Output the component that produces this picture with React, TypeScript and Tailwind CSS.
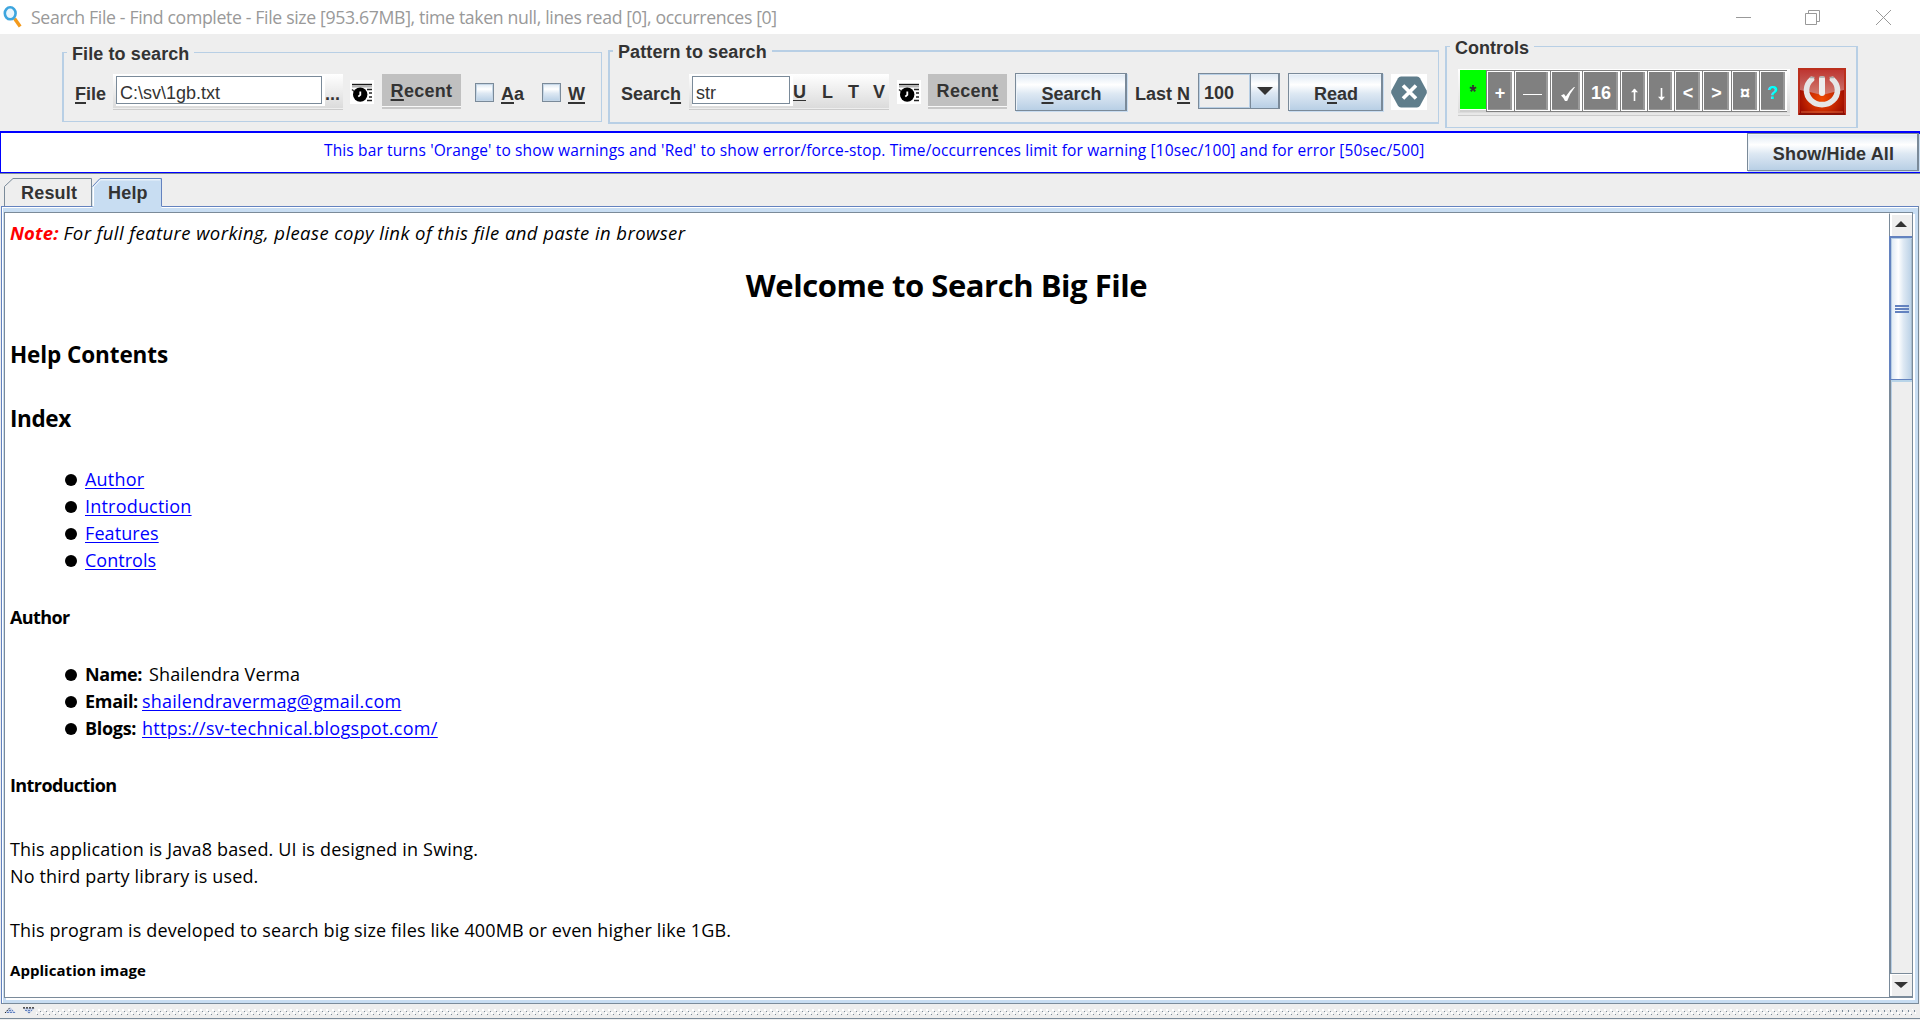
import type { ReactNode } from "react";

type Props = { className?: string; children?: ReactNode };

const UI = "font-['Liberation_Sans',Arial,sans-serif] text-[18px] text-[#333333] whitespace-nowrap";
const TEXT = "font-['Open_Sans','Noto_Sans',sans-serif] whitespace-nowrap";
const STEEL = "bg-[linear-gradient(to_bottom,#dde8f3_0%,#ffffff_30%,#dde8f3_55%,#b8cfe5_100%)]";

function Key({ children }: Props) {
  return <u className="decoration-2 underline-offset-2">{children}</u>;
}

function Legend({ className = "", children }: Props) {
  return <div className={"absolute left-[3px] bg-[#eeeeee] px-[5px] leading-5 font-bold " + className}>{children}</div>;
}

function HistoryIcon({ className = "" }: Props) {
  return (
    <svg viewBox="0 0 24 24" className={"h-6 w-6 shrink-0 bg-white " + className}>
      <path d="M2 3.8h20v1.500H2z" fill="#1a1a1a" />
      <path d="M2 5.800h20v1.700H2z" fill="#b5b5b5" />
      <path d="M17 9.500h5M19 13h3M19 17h3M17 20.500h5" stroke="#222" strokeWidth="1.400" />
      <path d="M2 9.500l3 2.500" stroke="#333" strokeWidth="1.600" />
      <circle cx="10.200" cy="14.600" r="7.200" fill="#000" />
      <path d="M10.300 11.500v3.300l-2 1.800" stroke="#fff" strokeWidth="1.800" fill="none" />
    </svg>
  );
}

function Recent({ className = "", children }: Props) {
  return (
    <div className={"h-[35px] w-[79px] shrink-0 bg-[#f8f8f8] " + className}>
      <div className="flex h-8 items-center justify-center bg-[#c0c0c0] pt-[2px] font-bold tracking-[0.3px]">
        <span>{children}</span>
      </div>
      <div className="mt-px h-[2px] bg-[#c8c8c8]" />
    </div>
  );
}

function Check({ className = "" }: Props) {
  return <div className={"h-[19px] w-[19px] shrink-0 border border-[#7a8a99] shadow-[inset_0_0_0_1px_#c5d6e6] " + STEEL + " " + className} />;
}

function SteelButton({ className = "", children }: Props) {
  return (
    <div className={"flex shrink-0 items-center justify-center border border-r-2 border-[#7a8a99] pt-[5px] pl-[2px] font-bold shadow-[inset_1px_1px_0_#edf3f9,1px_1px_0_#c8dcf0] " + STEEL + " " + className}>
      <span>{children}</span>
    </div>
  );
}

function Cell({ className = "", children }: Props) {
  return (
    <div className={"h-[42px] shrink-0 border-t border-b border-l border-[#808080] bg-white py-px pr-[2px] pl-px " + className}>
      <div className="flex h-[38px] items-center justify-center border-r-2 border-b border-r-[#9b9b9b] border-b-[#999999] bg-[#808080] pt-[6px] pl-[2px] font-bold text-white">
        {children}
      </div>
    </div>
  );
}

function PowerIcon() {
  return (
    <svg viewBox="0 0 48 47" className="ml-2 h-[47px] w-12 shrink-0">
      <defs>
        <radialGradient id="glow" cx=".5" cy=".66" r=".6">
          <stop offset="0" stopColor="#f04a00" />
          <stop offset=".45" stopColor="#c92a00" />
          <stop offset="1" stopColor="#8c0000" />
        </radialGradient>
        <linearGradient id="gloss" x1="0" y1="0" x2="0" y2="1">
          <stop offset="0" stopColor="#c8403a" />
          <stop offset="1" stopColor="#d08c88" />
        </linearGradient>
      </defs>
      <rect width="48" height="47" rx="1.500" fill="url(#glow)" />
      <path d="M2 2h44v20Q35 24 24 27 13 24 2 22z" fill="url(#gloss)" opacity=".85" />
      <rect x="1" y="1" width="46" height="45" fill="none" stroke="#bb2f1d" strokeWidth="2" />
      <path d="M1 46h46" stroke="#7a0800" strokeWidth="1.500" />
      <path d="M3 44h42" stroke="#d0623c" />
      <path d="M13.500 11.500A15.500 14.500 0 1 0 34.500 11.500" fill="none" stroke="#e6e6e6" strokeWidth="5.600" strokeLinecap="round" />
      <path d="M24 11v14" stroke="#ededed" strokeWidth="6" strokeLinecap="round" />
      <path d="M21.500 9h5M12 9.500h4.500M31.500 9.500H36" stroke="#a8a8a8" strokeWidth="1.500" />
    </svg>
  );
}

function Toolbar() {
  return (
    <div className={"flex h-[97px] shrink-0 items-start bg-[#eeeeee] pl-[62px] " + UI}>
      <section className="relative mt-[18px] h-[70px] w-[540px] shrink-0 border border-l-2 border-[#b8cfe5]">
        <Legend className="-top-[9px] tracking-[0.1px]">File to search</Legend>
        <div className="flex items-start pt-[21px] pl-[11px]">
          <span className="mt-[8px] w-[38px] leading-[24px] font-bold"><Key>F</Key>ile</span>
          <div className="flex h-[36px] w-[230px] border-b border-[#cccccc] bg-[linear-gradient(to_bottom,#ffffff,#dadada)] pt-[2px] pl-[3px] shadow-[inset_0_-1px_0_#eeeeee]">
            <div className="h-[30px] w-[209px] shrink-0 border-r-2 border-b-2 border-white bg-white">
              <div className="flex h-7 w-[206px] items-center border border-[#7a8a99] pt-[6px] pl-[3px]">C:\sv\1gb.txt</div>
            </div>
            <span className="mt-[5px] font-bold">...</span>
          </div>
          <HistoryIcon className="mt-[6px] ml-[7px]" />
          <Recent className="ml-[8px]"><Key>R</Key>ecent</Recent>
          <Check className="mt-[9px] ml-[14px]" />
          <span className="mt-[8px] ml-[7px] w-[41px] leading-[24px] font-bold"><Key>A</Key>a</span>
          <Check className="mt-[9px]" />
          <span className="mt-[8px] ml-[7px] leading-[24px] font-bold"><Key>W</Key></span>
        </div>
      </section>

      <section className="relative mt-4 ml-[6px] h-[74px] w-[831px] shrink-0 border-2 border-r border-[#b8cfe5]">
        <Legend className="-top-[10px] tracking-[0.1px]">Pattern to search</Legend>
        <div className="flex items-start pt-[21px] pl-[11px]">
          <span className="mt-[9px] w-[68px] leading-[24px] font-bold">Searc<Key>h</Key></span>
          <div className="mt-px flex h-[36px] w-[200px] border-b border-[#cccccc] bg-[linear-gradient(to_bottom,#ffffff,#dadada)] pt-[2px] pl-[3px] shadow-[inset_0_-1px_0_#eeeeee]">
            <div className="h-[30px] w-[101px] shrink-0 border-r-2 border-b-2 border-white bg-white">
              <div className="flex h-7 w-[98px] items-center border border-[#7a8a99] pt-[6px] pl-[3px]">str</div>
            </div>
            <div className="flex pt-[5px] leading-[22px] font-bold">
              <span className="w-[29px]"><u className="underline-offset-2">U</u></span>
              <span className="w-[26px]">L</span>
              <span className="w-[25px]">T</span>
              <span>V</span>
            </div>
          </div>
          <HistoryIcon className="mt-[7px] ml-[8px]" />
          <Recent className="mt-px ml-[7px]">Recen<Key>t</Key></Recent>
          <SteelButton className="ml-2 h-[38px] w-28"><Key>S</Key>earch</SteelButton>
          <span className="mt-[9px] ml-2 w-[63px] leading-[24px] font-bold">Last <Key>N</Key></span>
          <div className="flex h-9 w-[82px] shrink-0 border border-r-2 border-[#7a8a99] font-bold">
            <div className="flex w-[51px] items-center border border-[#b8cfe5] pt-[4px] pl-1">100</div>
            <div className={"flex flex-1 items-center justify-center border-l border-[#7a8a99] " + STEEL}>
              <svg viewBox="0 0 16 8" className="h-2 w-4"><path d="M0 0h16L8 8z" fill="#333333" /></svg>
            </div>
          </div>
          <SteelButton className="ml-2 h-[38px] w-[95px]">R<Key>e</Key>ad</SteelButton>
          <svg viewBox="0 0 36 36" className="mt-px ml-2 h-9 w-9 shrink-0 bg-white">
            <path d="M10 2.500h16q2 0 3 1.700l6.500 12q.7 1.800 0 3.600L29 31.800Q28 33.500 26 33.500H10q-2 0-3-1.700L.5 19.800q-.7-1.800 0-3.600L7 4.200Q8 2.500 10 2.500z" fill="#5f7d8b" />
            <path d="M12 11.500l13 13m0-13l-13 13" stroke="#ffffff" strokeWidth="3.600" />
          </svg>
        </div>
      </section>

      <section className="relative mt-3 ml-[6px] h-[82px] w-[413px] shrink-0 border border-x-2 border-[#b8cfe5]">
        <Legend className="-top-[9px]">Controls</Legend>
        <div className="flex items-start pt-[21px] pl-[11px]">
          <div className="mt-px flex h-[47px] w-[332px] border-b border-[#cccccc] bg-[linear-gradient(to_bottom,#ffffff,#dadada)] pt-px pl-[2px] shadow-[inset_0_-2px_0_#e8e8e8]">
            <div className="h-[42px] w-[26px] bg-[#d0d0d0]">
              <div className="flex h-10 items-start justify-center border-b border-white bg-[#00ff00] pt-[9px] font-bold">*</div>
            </div>
            <Cell className="w-[28px]">+</Cell>
            <Cell className="w-[36px]"><span className="mt-px h-px w-[19px] bg-white" /></Cell>
            <Cell className="w-[32px]">
              <svg viewBox="0 0 14 14" className="ml-[3px] h-[14px] w-[14px]"><path d="M0 8.500l3-1.500 1.800 2.500Q8 4 13 0h1Q9 6 6.200 14H4Q2.500 10.500 0 8.500z" fill="#ffffff" /></svg>
            </Cell>
            <Cell className="w-[38px]">16</Cell>
            <Cell className="w-[27px]"><svg viewBox="0 0 8 13" className="mt-px h-[13px] w-2"><path d="M4.500 1v12" stroke="#ffffff" strokeWidth="1.600" /><path d="M1 4.200L4.500 .5 8 4.200z" fill="#ffffff" /></svg></Cell>
            <Cell className="w-[27px]"><svg viewBox="0 0 8 13" className="mt-px h-[13px] w-2"><path d="M4.500 0v12" stroke="#ffffff" strokeWidth="1.600" /><path d="M1 8.800l3.500 3.700L8 8.800z" fill="#ffffff" /></svg></Cell>
            <Cell className="w-[28px]">&lt;</Cell>
            <Cell className="w-[29px]">&gt;</Cell>
            <Cell className="w-[28px]">¤</Cell>
            <Cell className="w-[28px]"><span className="text-[#00ffff]">?</span></Cell>
          </div>
          <PowerIcon />
        </div>
      </section>
    </div>
  );
}

function Item({ children }: Props) {
  return (
    <li className="flex h-[27px] items-center">
      <span className="mr-2 h-3 w-3 rounded-full bg-black" />
      {children}
    </li>
  );
}

function Link({ className = "tracking-[0.2px]", children }: Props) {
  return <a className={"text-[#0000ff] underline decoration-1 underline-offset-2 " + className}>{children}</a>;
}

function HelpPage() {
  return (
    <div className={"w-[1884px] shrink-0 pt-[7px] pr-[6px] pl-[5px] text-[18px] leading-[27px] tracking-[0.13px] text-black " + TEXT}>
      <p className="h-[27px] text-[18.5px] leading-[26px] italic">
        <span className="font-bold text-[#ff0000]">Note:</span>{" "}
        <span className="tracking-[0.42px]">For full feature working, please copy link of this file and paste in browser</span>
      </p>
      <h1 className="mt-[18px] text-center text-[31px] leading-10 font-bold tracking-[-0.45px]">Welcome to Search Big File</h1>
      <h2 className="mt-[35px] text-[22.5px] leading-[30px] font-bold tracking-[-0.1px]">Help Contents</h2>
      <h2 className="mt-[34px] text-[22.5px] leading-[30px] font-bold tracking-[-0.4px]">Index</h2>
      <ul className="mt-8 pl-[55px]">
        <Item><Link>Author</Link></Item>
        <Item><Link className="tracking-[0.2px]">Introduction</Link></Item>
        <Item><Link className="tracking-[0.1px]">Features</Link></Item>
        <Item><Link className="tracking-[0.02px]">Controls</Link></Item>
      </ul>
      <h4 className="mt-[30px] font-bold tracking-[-0.6px]">Author</h4>
      <ul className="mt-[30px] pl-[55px]">
        <Item><span className="w-16 font-bold tracking-[-0.4px]">Name:</span>Shailendra Verma</Item>
        <Item><span className="w-[57px] font-bold tracking-[-0.3px]">Email:</span><Link className="tracking-[0.22px]">shailendravermag@gmail.com</Link></Item>
        <Item><span className="w-[57px] font-bold tracking-[-0.3px]">Blogs:</span><Link className="tracking-[0.32px]">https://sv-technical.blogspot.com/</Link></Item>
      </ul>
      <h4 className="mt-[30px] font-bold tracking-[-0.6px]">Introduction</h4>
      <p className="mt-[37px] tracking-[0.17px]">This application is Java8 based. UI is designed in Swing.</p>
      <p>No third party library is used.</p>
      <p className="mt-[27px]">This program is developed to search big size files like 400MB or even higher like 1GB.</p>
      <h5 className="mt-[16px] text-[15px] leading-5 font-bold tracking-[0.05px]">Application image</h5>
    </div>
  );
}

function ScrollBar() {
  return (
    <div className="flex w-[23px] shrink-0 flex-col bg-[#eeeeee]">
      <div className="flex h-[23px] items-center justify-center border-t border-l border-white border-l-[#7a8a99] shadow-[inset_2px_1px_0_#ffffff]">
        <svg viewBox="0 0 12 6" className="mt-[-3px] h-[6px] w-3"><path d="M0 6h12L6 0z" fill="#333333" /></svg>
      </div>
      <div className="flex h-36 flex-col items-center justify-center gap-px border-t-2 border-b border-l-2 border-[#6382bf] bg-[linear-gradient(to_right,#dde8f3_0%,#ffffff_35%,#dde8f3_60%,#b8cfe5_100%)] shadow-[inset_1px_1px_0_#b8cfe5,inset_-1px_0_0_#a3b8cc,0_2px_0_#b8d4e8]">
        <div className="h-[2px] w-[14px] bg-[#6382bf]" />
        <div className="h-[2px] w-[14px] bg-[#6382bf]" />
        <div className="h-[2px] w-[14px] bg-[#6382bf]" />
      </div>
      <div className="flex-1 border-l-2 border-[#7a8a99] shadow-[inset_1px_0_0_#b8cfe5]" />
      <div className="flex h-6 items-center justify-center border-y border-l border-[#7a8a99] shadow-[inset_2px_1px_0_#ffffff]">
        <svg viewBox="0 0 14 6" className="h-[6px] w-[14px]"><path d="M0 0h14L7 6z" fill="#333333" /></svg>
      </div>
    </div>
  );
}

function SplitDivider() {
  return (
    <footer className="flex h-[15px] shrink-0 items-start border-b border-[#7a8a99] pt-[3px] pl-[4px]">
      <svg viewBox="0 0 32 8" className="h-2 w-8 shrink-0">
        <path d="M1 6L6 0l6 6z" fill="#c3cfe8" />
        <path d="M1 6L6 .5" stroke="#222222" strokeDasharray="1.500 1" />
        <path d="M3 5.500h9M5 3.500h4" stroke="#6382bf" strokeDasharray="2 1" />
        <path d="M19 1h12l-6 6z" fill="#c3cfe8" />
        <path d="M19 .8h12" stroke="#222222" strokeWidth="1.300" strokeDasharray="2 1" />
        <path d="M21 3.500h7M24 5.500h3" stroke="#6382bf" strokeDasharray="2 1" />
      </svg>
      <svg className="mt-[2px] h-[7px] w-[1793px] shrink-0">
        <defs>
          <pattern id="dots" width="6" height="7" patternUnits="userSpaceOnUse">
            <path d="M2 0h2v2H2zM5 3h1v2H5zM0 3h1v2H0z" fill="#ffffff" />
            <path d="M4 2h1v1H4zM1 5h1v1H1z" fill="#7a8a99" />
          </pattern>
        </defs>
        <rect width="1793" height="7" fill="url(#dots)" />
      </svg>
      <svg className="mt-[2px] h-[7px] w-[87px] shrink-0">
        <defs>
          <pattern id="ticks" width="6" height="7" patternUnits="userSpaceOnUse">
            <path d="M5 0h1v1H5zM2 3h2v2H2z" fill="#ffffff" />
            <path d="M1 1h1v2H1zM4 5h1v1H4z" fill="#7a8a99" />
          </pattern>
        </defs>
        <rect width="87" height="7" fill="url(#ticks)" />
      </svg>
    </footer>
  );
}

export default function App() {
  return (
    <div className="flex h-[1020px] w-[1920px] flex-col overflow-hidden bg-[#eeeeee]">
      <header className="flex h-[34px] shrink-0 items-center bg-white pl-[3px]">
        <svg viewBox="0 0 20 22" className="h-[22px] w-5">
          <path d="M11.500 12.500l5.700 8" stroke="#f39a1c" strokeWidth="3.400" />
          <ellipse cx="7.200" cy="7.300" rx="5.400" ry="6" fill="#eaf6fd" stroke="#3da5de" strokeWidth="2.600" />
        </svg>
        <span className={"ml-2 flex-1 pt-px text-[17.7px] tracking-[-0.36px] text-[#999999] " + TEXT}>
          Search File - Find complete - File size [953.67MB], time taken null, lines read [0], occurrences [0]
        </span>
        <svg viewBox="0 0 160 16" className="mr-[28px] h-4 w-[160px]" fill="none" stroke="#999999">
          <path d="M4 8.500h15M73.500 4.500h11v11h-11zM76.500 4V1.500h11v11h-3M144 1l15 15M159 1l-15 15" />
        </svg>
      </header>
      <Toolbar />
      <div className="flex h-[42px] shrink-0 border border-t-2 border-[#0000ff] bg-white">
        <div className={"flex flex-1 items-center pb-[3px] pl-[323px] text-[15.5px] tracking-[0.135px] text-[#0000ff] " + TEXT}>
          This bar turns 'Orange' to show warnings and 'Red' to show error/force-stop. Time/occurrences limit for warning [10sec/100] and for error [50sec/500]
        </div>
        <div className={"flex " + UI}>
          <SteelButton className="h-[38px] w-[172px] tracking-[0.15px]">Show/Hide All</SteelButton>
        </div>
      </div>
      <div className={"flex h-[33px] shrink-0 items-end border-t border-[#7a8a99] pl-[4px] font-bold " + UI}>
        <div className="relative flex h-7 w-[88px] items-center">
          <svg viewBox="0 0 88 28" className="absolute inset-0 h-7 w-[88px]" fill="none" stroke="#7a8a99"><path d="M.5 28V8.500L9 .5h78.500V28" /></svg>
          <span className="relative ml-[17px] pt-[3px] tracking-[0.2px]">Result</span>
        </div>
        <div className="relative z-10 flex h-7 w-[70px] items-center">
          <svg viewBox="0 0 70 31" className="absolute top-0 left-0 h-[31px] w-[70px]">
            <path d="M.5 31V8.500L8 .5h61.500V31z" fill="#c8ddf2" />
            <path d="M.5 8.500L8 .5h61.500V28" fill="none" stroke="#6382bf" />
            <path d="M1.500 28V9L8.500 1.800H68" fill="none" stroke="#ffffff" />
          </svg>
          <span className="relative ml-[16px] pt-[3px] tracking-[0.2px]">Help</span>
        </div>
      </div>
      <div className="ml-px flex h-[798px] w-[1918px] shrink-0 border border-[#6382bf] border-r-[#7a8a99] border-b-[#7a8a99] bg-[#c8ddf2] shadow-[inset_1px_1px_0_#ffffff]">
        <div className="mt-[5px] ml-[2px] flex h-[786px] w-[1909px] shrink-0 border border-[#7a8a99] bg-white shadow-[2px_2px_0_#ffffff]">
          <HelpPage />
          <ScrollBar />
        </div>
      </div>
      <SplitDivider />
    </div>
  );
}
